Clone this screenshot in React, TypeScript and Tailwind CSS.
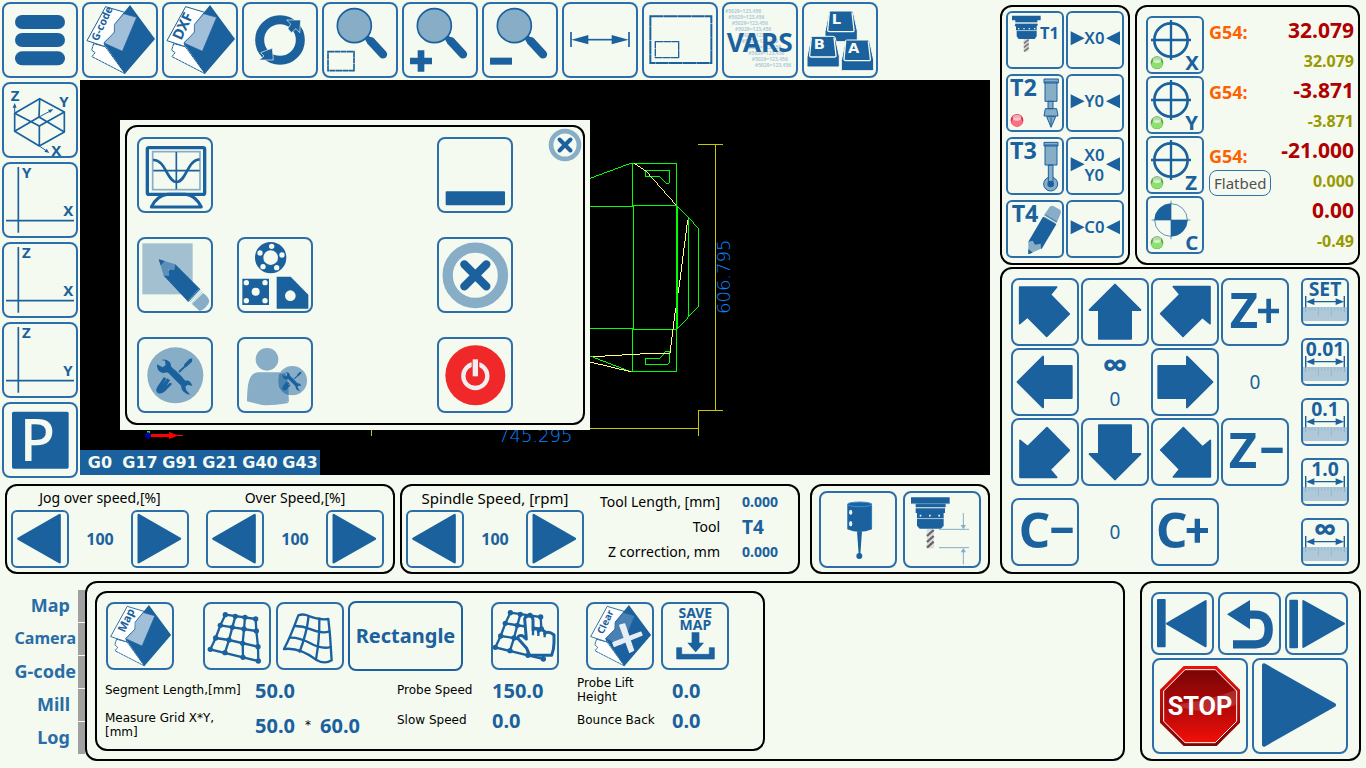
import { useState } from 'react';
import type { ReactNode } from 'react';
import clsx from 'clsx';

const BLUE = '#1a619e';
const SOFT = '#87adc7';
const PAPER = '#f4faf0';

interface IconButtonProps {
  label: string;
  className?: string;
  w: number;
  h?: number;
  children?: ReactNode;
  onClick?: () => void;
}

// Every icon is drawn three units to the pixel, the border included
function IconButton({ label, className, w, h = w, children, onClick }: IconButtonProps) {
  return (
    <button
      type="button"
      aria-label={label}
      onClick={onClick}
      className={clsx('shrink-0 rounded-lg border-2 border-[#2c6ea7] bg-[#f4faf0] font-bold', className)}
    >
      <svg viewBox={`6 6 ${w - 12} ${h - 12}`} className="block h-full w-full overflow-visible" fill={BLUE} aria-hidden="true">
        {children}
      </svg>
    </button>
  );
}

function Panel({ className, children }: { className?: string; children: ReactNode }) {
  return <section className={clsx('rounded-xl border-2 border-black', className)}>{children}</section>;
}

/* ---------- toolbar icons ---------- */

function FolderIcon({ text, size, x = 47, y = 119, clear = false }: { text: string; size: number; x?: number; y?: number; clear?: boolean }) {
  return (
    <>
      <path d="M35 125 L29 144 L39 152 L30 164 L129 215 L70 134 Z" fill="#fff" stroke={BLUE} strokeWidth="3" strokeDasharray="9 1" />
      <path d="M71 14 L128 31 L103 70 L98 92 L66 122 L70 134 L15 116 Z" fill="#fff" stroke={BLUE} strokeWidth="3" />
      <path d="M144 9 L219 111 L129 215 L66 125 L96 91 L98 66 Z" />
      <path d="M125 35 L164 46 L121 148 L66 123 L97 91 L97 68 Z" fill={clear ? '#4a80b3' : '#a2bfd9'} stroke={BLUE} strokeWidth="2" />
      {clear && (
        <>
          <path d="M114 78 L129 74 L159 162 L147 168 Z" fill="#e6edf5" stroke="#e6edf5" strokeWidth="6" strokeLinejoin="round" />
          <path d="M90 137 L184 101 L188 111 L95 149 Z" fill="#e6edf5" stroke="#e6edf5" strokeWidth="5" strokeLinejoin="round" />
        </>
      )}
      <text x={x} y={y} fontSize={size} transform={`rotate(-65 ${x} ${y})`}>{text}</text>
    </>
  );
}

function Magnifier() {
  return (
    <>
      <circle cx="97" cy="71" r="51" fill={SOFT} stroke={BLUE} strokeWidth="5" />
      <path d="M147 118 L183 157" stroke={BLUE} strokeWidth="25" strokeLinecap="round" />
      <path d="M128 111 L138 101 L157 110 L138 127 Z" />
    </>
  );
}

function Keycap({ x, y, letter }: { x: number; y: number; letter: string }) {
  return (
    <g transform={`translate(${x} ${y})`}>
      <path d="M12 2 Q14 0 18 0 H78 Q84 0 85 5 L97 60 V88 Q97 92 92 92 H4 Q0 92 0 88 V62 Z" stroke={PAPER} strokeWidth="3" />
      <path d="M13 4 L8 58 Q8 62 14 62 H82 Q88 62 87 57 L81 4" fill="none" stroke={PAPER} strokeWidth="4" />
      <text x="20" y="39" fontSize="44" fill={PAPER} fontFamily="'DejaVu Sans', sans-serif">{letter}</text>
    </g>
  );
}

function AxisIcon({ up, side }: { up: string; side: string }) {
  return (
    <>
      <path d="M49 15 V212 M12 176 H216" stroke={BLUE} strokeWidth="5" />
      <text x="60" y="47" fontSize="45">{up}</text>
      <text x="184" y="162" fontSize="45">{side}</text>
    </>
  );
}

const varsRows = Array.from({ length: 10 }, (_, i) => i);

function Toolbar({ onMenu }: { onMenu: () => void }) {
  const btn = 'size-[76px]';
  return (
    <nav aria-label="Main tools" className="flex gap-1 p-0.5">
      <IconButton label="Menu" className={btn} w={228} onClick={onMenu}>
        <rect x="39" y="39" width="150" height="42" rx="21" />
        <rect x="39" y="93" width="150" height="42" rx="21" />
        <rect x="39" y="148" width="150" height="42" rx="21" />
      </IconButton>
      <IconButton label="Open G-code" className={btn} w={228}>
        <FolderIcon text="G-code" size={32} />
      </IconButton>
      <IconButton label="Open DXF" className={btn} w={228}>
        <FolderIcon text="DXF" size={44} x={58} y={117} />
      </IconButton>
      <IconButton label="Reload" className={btn} w={228}>
        <circle cx="114" cy="114" r="61" fill="none" stroke={BLUE} strokeWidth="27" />
        <path d="M134 54 H176 L173 92 L162 80 L148 92 L138 80 L146 66 Z" stroke={PAPER} strokeWidth="2" />
        <path d="M94 174 H52 L66 162 L56 152 L76 144 L91 139 Z" stroke={PAPER} strokeWidth="2" />
      </IconButton>
      <IconButton label="Zoom to area" className={btn} w={228}>
        <Magnifier />
        <rect x="18" y="149" width="78" height="57" fill="none" stroke={BLUE} strokeWidth="5" strokeDasharray="18 1" />
      </IconButton>
      <IconButton label="Zoom in" className={btn} w={228}>
        <Magnifier />
        <path d="M24 167 H47 V145 H67 V167 H90 V187 H67 V209 H47 V187 H24 Z" />
      </IconButton>
      <IconButton label="Zoom out" className={btn} w={228}>
        <Magnifier />
        <rect x="24" y="167" width="66" height="21" />
      </IconButton>
      <IconButton label="Measure" className={btn} w={228}>
        <path d="M27 90 V135 M201 90 V135" stroke={BLUE} strokeWidth="5" />
        <path d="M70 113 H160" stroke={BLUE} strokeWidth="5" />
        <path d="M28 113 L79 99 V127 Z M200 113 L149 99 V127 Z" />
      </IconButton>
      <IconButton label="Work area" className={btn} w={228}>
        <rect x="25" y="43" width="183" height="140" fill="none" stroke={BLUE} strokeWidth="6" strokeDasharray="40 1" />
        <rect x="40" y="119" width="70" height="48" fill="none" stroke={BLUE} strokeWidth="4" strokeDasharray="23 1" />
      </IconButton>
      <IconButton label="Variables" className={btn} w={228}>
        <g fill="#b1cbd8" fontSize="15">
          {varsRows.map((i) => (
            <text key={i} x={9 + i * 10} y={34 + i * 18}>#5029=123,456</text>
          ))}
        </g>
        <text x="14" y="150" fontSize="79">VARS</text>
      </IconButton>
      <IconButton label="Keyboard" className={btn} w={228}>
        <Keycap x={69} y={27} letter="L" />
        <Keycap x={15} y={103} letter="B" />
        <Keycap x={118} y={114} letter="A" />
      </IconButton>
    </nav>
  );
}

function ViewBar() {
  const btn = 'size-[76px]';
  return (
    <nav aria-label="Views" className="flex flex-col gap-1 p-0.5">
      <IconButton label="3D view" className={btn} w={228}>
        <g fill="none" stroke={BLUE} strokeWidth="5" strokeLinejoin="round">
          <path d="M113 50 L187 90 V150 L112 192 L38 148 V94 Z" />
          <path d="M113 50 L111 105 M112 132 V192" />
          <path d="M38 94 L112 132 L187 90 M38 148 L111 105 L187 150" />
          <path d="M111 105 L145 87 M38 92 V70 M112 192 L134 207" strokeWidth="3" />
        </g>
        <path d="M154 82 L138 83 L144 93 Z M38 63 L32 77 H44 Z M142 213 L127 209 L134 200 Z" />
        <text x="26" y="57" fontSize="45">Z</text>
        <text x="172" y="74" fontSize="45">Y</text>
        <text x="148" y="223" fontSize="45">X</text>
      </IconButton>
      <IconButton label="XY view" className={btn} w={228}><AxisIcon up="Y" side="X" /></IconButton>
      <IconButton label="XZ view" className={btn} w={228}><AxisIcon up="Z" side="X" /></IconButton>
      <IconButton label="YZ view" className={btn} w={228}><AxisIcon up="Z" side="Y" /></IconButton>
      <IconButton label="Park" className={btn} w={228}>
        <rect x="30" y="29" width="170" height="171" rx="5" />
        <text x="53" y="176" fontSize="174" fontWeight="500" fill={PAPER}>P</text>
      </IconButton>
    </nav>
  );
}

/* ---------- drawing area ---------- */

function ToolpathView() {
  return (
    <svg viewBox="0 0 910 395" className="block h-[395px] w-[910px] max-w-none" aria-label="Tool path" fill="none">
      <g transform="translate(500 30) scale(0.33333)" strokeWidth="3" shapeRendering="crispEdges">
        <path d="M354 103 H429 M406 103 V901 M354 901 H429 M355 901 V977 M-628 955 H355 M-626 955 V977" stroke="#c8c800" />
        <g stroke="#00ff00">
          <path d="M30 205 L152 160 H289 V785 H152 L30 738" />
          <path d="M157 160 V286 H289 M30 289 H160 V656 H30 M289 658 H157 V785" />
          <path d="M292 289 V656 L355 590 V354 L292 289 M325 322 V622" />
          <path d="M196 181 H268 V220 H258 L239 199 H196 Z" />
          <path d="M196 763 H264 L268 758 V724 H258 L239 745 H196 Z" />
        </g>
        <path d="M163 160 L198 183 L289 286 M323 330 L295 548 M287 594 L270 730 L198 731 L40 740 M30 756 L152 785" stroke="#ffff80" />
      </g>
      <g fill="#0a84ff" fontFamily="'DejaVu Sans', sans-serif" fontSize="18" fontWeight="200">
        <text x="418" y="362">745.295</text>
        <text x="650" y="234" transform="rotate(-90 650 234)">606.795</text>
      </g>
      <path d="M67 351 H70 V355 H67 Z" fill="#00ff00" />
      <path d="M71 354 H89 V352 L97 355 H103 V356 H97 L89 359 V357 H71 Z" fill="#ff0000" />
      <path d="M65 354 L68 352 L71 354 V357 L68 359 L65 357 Z" fill="#0000a0" />
    </svg>
  );
}

function WrenchTools() {
  return (
    <>
      <path d="M90 90 L143 143" stroke={BLUE} strokeWidth="20" />
      <path d="M60 82 L77 91 L86 84 L84 71 L73 69 Q88 64 98 75 Q105 84 100 98 L96 106 L76 108 Q58 101 60 82 Z" />
      <path d="M166 147 L152 143 L145 149 L148 160 L160 173 Q146 172 138 163 Q131 154 133 140 L142 132 Q160 125 166 147 Z" />
      <path d="M166 64 L157 66 L142 82 L141 88 L147 91 L165 74 Z M142 86 L124 103 L128 107 L146 90 Z" />
      <path d="M112 98 L136 121 M106 102 L112 107" stroke={BLUE} strokeWidth="2" />
      <path d="M81 120 L61 149 Q54 161 62 168 Q72 173 84 163 L106 140 L98 137 L88 147 L99 130 L91 124 L78 142 L88 125 Z" />
    </>
  );
}

function MainMenu({ onClose }: { onClose: () => void }) {
  const btn = 'size-[76px]';
  return (
    <div role="dialog" aria-label="Main menu" className="absolute left-10 top-10 bg-[#f4faf0] p-[5px]">
      <div className="grid h-[300px] w-[460px] grid-cols-[repeat(4,76px)] grid-rows-[repeat(3,76px)] gap-6 rounded-xl border-2 border-black p-2.5">
        <IconButton label="Machine monitor" className={btn} w={228}>
          <rect x="31" y="32" width="172" height="140" rx="5" fill="none" stroke={BLUE} strokeWidth="10" />
          <rect x="47" y="44" width="142" height="114" fill="none" stroke={SOFT} strokeWidth="5" />
          <path d="M118 45 V157 M49 101 H188" stroke={BLUE} strokeWidth="5" />
          <path d="M48 69 C85 66 90 135 119 135 S150 69 188 67" fill="none" stroke={BLUE} strokeWidth="8" />
          <path d="M43 210 Q60 176 92 172 H146 Q176 176 193 210 Z" fill="none" stroke={BLUE} strokeWidth="9" strokeLinejoin="round" />
        </IconButton>
        <IconButton label="Minimize" className={clsx(btn, 'col-start-4')} w={228}>
          <rect x="26" y="163" width="178" height="42" rx="3" />
        </IconButton>
        <IconButton label="Editor" className={btn} w={228}>
          <rect x="16" y="19" width="151" height="153" fill="#a3c0d1" />
          <path d="M80 116 L115 82 L190 157 L154 195 Z" />
          <path d="M65 67 L115 82 L112 100 L95 97 L97 116 L80 116 Z" fill="#5d90b9" />
          <path d="M65 67 L83 72 L71 85 Z" />
          <path d="M155 190 L187 155 M159 195 L192 160 M164 199 L196 164" stroke={SOFT} strokeWidth="2" />
          <path d="M165 201 L198 168 Q216 180 217 194 Q208 215 188 222 Z" fill={SOFT} />
        </IconButton>
        <IconButton label="Parts" className={btn} w={228}>
          <circle cx="101" cy="62" r="47" />
          <path d="M16 125 H96 V204 H16 Z M119 119 H161 L214 173 V215 H119 Z" />
          <g fill={PAPER}>
            <circle cx="101" cy="62" r="22" />
            <circle cx="104" cy="28" r="8" />
            <circle cx="135" cy="54" r="8" />
            <circle cx="119" cy="92" r="8" />
            <circle cx="78" cy="89" r="8" />
            <circle cx="69" cy="48" r="8" />
            <circle cx="28" cy="137" r="8" />
            <circle cx="84" cy="137" r="8" />
            <circle cx="28" cy="191" r="8" />
            <circle cx="84" cy="191" r="8" />
            <circle cx="56" cy="164" r="12" />
            <circle cx="160" cy="176" r="16" />
          </g>
        </IconButton>
        <IconButton label="Close program" className={clsx(btn, 'col-start-4')} w={228}>
          <circle cx="115" cy="115" r="83" fill="none" stroke={SOFT} strokeWidth="31" />
          <path d="M82 82 L148 148 M148 82 L82 148" stroke={BLUE} strokeWidth="25" strokeLinecap="round" />
        </IconButton>
        <IconButton label="Settings" className={btn} w={228}>
          <circle cx="115" cy="115" r="84" fill={SOFT} />
          <WrenchTools />
        </IconButton>
        <IconButton label="User settings" className={btn} w={228}>
          <circle cx="90" cy="67" r="34" fill={SOFT} />
          <path d="M30 193 C32 145 32 106 68 106 H122 C150 106 154 130 156 194 L150 193 L155 198 Q85 209 66 202 Z" fill={SOFT} />
          <circle cx="166" cy="131" r="44" fill={SOFT} />
          <path d="M126 110 Q122 131 126 150 Q136 170 155 174 Q155 130 145 108 Z" fill="#4a82b0" />
          <g transform="translate(105 70) scale(0.53)"><WrenchTools /></g>
        </IconButton>
        <IconButton label="Power off" className={clsx(btn, 'col-start-4')} w={228}>
          <circle cx="115" cy="115" r="90" fill="#f02829" />
          <circle cx="115" cy="117" r="36" fill="none" stroke="#f0eeee" strokeWidth="13" />
          <rect x="104" y="64" width="23" height="57" fill="#f02829" />
          <rect x="107" y="67" width="16" height="51" fill="#f0eeee" />
        </IconButton>
      </div>
      <button type="button" aria-label="Close menu" onClick={onClose} className="absolute right-2 top-2 size-[34px]">
        <svg viewBox="0 0 100 100" className="block size-full">
          <circle cx="50" cy="50" r="41" fill={PAPER} stroke={SOFT} strokeWidth="14" />
          <path d="M34 34 L66 66 M66 34 L34 66" stroke={BLUE} strokeWidth="12" strokeLinecap="round" />
        </svg>
      </button>
    </div>
  );
}

/* ---------- tools and coordinates ---------- */

function Led({ x, y, color }: { x: number; y: number; color: 'green' | 'red' }) {
  const dark = color === 'green' ? '#4f9f3a' : '#d9304c';
  const light = color === 'green' ? '#8ee070' : '#ff6f83';
  return (
    <g>
      <circle cx={x} cy={y} r="19" fill={dark} />
      <ellipse cx={x} cy={y + 5} rx="17" ry="13" fill={light} />
      <ellipse cx={x} cy={y - 8} rx="13" ry="9" fill="#fff" opacity="0.6" />
    </g>
  );
}

function Spindle() {
  return (
    <>
      <path d="M18 14 H104 V28 H18 Z M28 28 H94 V34 H28 Z M28 38 H95 V44 H92 V58 H30 V46 H26 Z M32 60 H92 V76 L86 84 H38 L32 76 Z" />
      <path d="M28 36 H94 M32 59 H92" stroke={SOFT} strokeWidth="2" />
      <path d="M36 53 H90" stroke={PAPER} strokeWidth="4" strokeDasharray="4 12" />
      <path d="M53 84 H69 V118 L61 124 L53 118 Z" fill="#d8d8d8" />
      <path d="M54 97 L68 86 M54 109 L68 98 M54 121 L68 110" stroke="#777" strokeWidth="5" />
    </>
  );
}

function ZeroMarks({ lines }: { lines: string[] }) {
  return (
    <>
      <path d="M14 61 V103 L56 82 Z M162 61 V103 L120 82 Z" />
      {lines.map((t, i) => (
        <text key={t} x="85" y={(lines.length > 1 ? 73 : 99) + i * 58} fontSize="50" fontWeight="600" textAnchor="middle">{t}</text>
      ))}
    </>
  );
}

function ToolPanel() {
  const btn = 'size-[58px] rounded-md';
  return (
    <Panel className="grid w-[130px] shrink-0 grid-cols-2 content-start gap-x-0.5 gap-y-[5px] p-1">
      <IconButton label="Tool T1" className={btn} w={174}>
        <Spindle />
        <text x="102" y="84" fontSize="49">T1</text>
      </IconButton>
      <IconButton label="Zero X" className={btn} w={174}><ZeroMarks lines={['X0']} /></IconButton>
      <IconButton label="Tool T2" className={btn} w={174}>
        <text x="12" y="67" fontSize="70">T2</text>
        <Led x={33} y={139} color="red" />
        <g fill={SOFT} stroke={BLUE} strokeWidth="3">
          <path d="M117 24 H153 V82 H117 Z M114 15 H157 V27 H114 Z M126 82 H141 V104 H126 Z M118 104 H152 L156 126 H114 Z M122 128 H149 L135 160 Z" />
        </g>
        <path d="M135 131 V158" stroke={BLUE} strokeWidth="3" />
      </IconButton>
      <IconButton label="Zero Y" className={btn} w={174}><ZeroMarks lines={['Y0']} /></IconButton>
      <IconButton label="Tool T3" className={btn} w={174}>
        <text x="12" y="67" fontSize="70">T3</text>
        <g fill={SOFT} stroke={BLUE} strokeWidth="3">
          <circle cx="134" cy="141" r="21" />
          <path d="M117 24 H153 V84 H117 Z M114 16 H156 V27 H114 Z M127 84 H141 V134 H127 Z" />
        </g>
        <circle cx="134" cy="141" r="10" />
      </IconButton>
      <IconButton label="Zero X and Y" className={btn} w={174}><ZeroMarks lines={['X0', 'Y0']} /></IconButton>
      <IconButton label="Tool T4" className={btn} w={174}>
        <text x="17" y="67" fontSize="70">T4</text>
        <path d="M111 50 L151 73 L107 147 L67 125 Z" />
        <path d="M127 26 Q132 15 142 18 L160 28 Q168 34 163 43 L152 69 L114 46 Z" fill={SOFT} />
        <path d="M114 51 L149 71 M118 45 L152 65" stroke={BLUE} strokeWidth="2" />
        <path d="M67 125 L80 122 L87 134 L104 131 L105 146 L67 163 Z" fill={SOFT} />
        <path d="M67 163 V147 L80 158 Z" />
      </IconButton>
      <IconButton label="Zero C" className={btn} w={174}><ZeroMarks lines={['C0']} /></IconButton>
    </Panel>
  );
}

const axes = [
  { axis: 'X', system: 'G54:', work: '32.079', machine: '32.079' },
  { axis: 'Y', system: 'G54:', work: '-3.871', machine: '-3.871' },
  { axis: 'Z', system: 'G54:', work: '-21.000', machine: '0.000', mode: 'Flatbed' },
  { axis: 'C', system: '', work: '0.00', machine: '-0.49' },
];

function CoordinatePanel() {
  return (
    <Panel className="flex min-w-0 flex-1 flex-col gap-0.5 py-[9px] pl-[9px] pr-1">
      {axes.map(({ axis, system, work, machine, mode }) => (
        <div key={axis} className="flex h-[58px] items-start">
          <IconButton label={`Home ${axis}`} className="size-[58px] rounded-md" w={174}>
            {axis === 'C' ? (
              <>
                <circle cx="75" cy="72" r="49" fill="none" stroke={BLUE} strokeWidth="2" />
                <path d="M75 72 V23 A49 49 0 0 0 26 72 Z M75 72 V121 A49 49 0 0 0 124 72 Z" />
                <path d="M75 14 V130 M17 72 H133" stroke={BLUE} strokeWidth="2" />
              </>
            ) : (
              <>
                <circle cx="75" cy="72" r="50" fill="none" stroke={BLUE} strokeWidth="8" />
                <path d="M75 12 V132 M15 72 H135" stroke={BLUE} strokeWidth="7" />
              </>
            )}
            <Led x={33} y={140} color="green" />
            <text x="118" y="162" fontSize="61">{axis}</text>
          </IconButton>
          <div className="flex flex-1 flex-col items-start pl-[5px] pt-0.5">
            <span className={clsx('text-lg font-bold leading-7 text-[#ff6000]', mode && 'pt-1')}>{system}</span>
            {mode && (
              <button type="button" className="h-[26px] shrink-0 rounded-lg border border-[#3273aa] px-1 text-[15px] leading-6 text-[#505050]">{mode}</button>
            )}
          </div>
          <div className="flex flex-col text-right font-bold">
            <output className="text-[21px] leading-[29px] text-[#b00000]">{work}</output>
            <output className="text-base leading-[33px] text-[#999900]">{machine}</output>
          </div>
        </div>
      ))}
    </Panel>
  );
}

/* ---------- jog ---------- */

function StraightArrow({ turn }: { turn: number }) {
  return (
    <path
      d="M102 20 L178 96 H150 V182 H54 V96 H26 Z"
      stroke={BLUE}
      strokeWidth="6"
      strokeLinejoin="round"
      transform={`rotate(${turn} 102 102)`}
    />
  );
}

function DiagonalArrow({ turn }: { turn: number }) {
  return (
    <path
      d="M26 27 H137 L118 50 L175 108 L107 175 L49 117 L26 137 Z"
      stroke={BLUE}
      strokeWidth="5"
      strokeLinejoin="round"
      transform={`rotate(${turn} 102 102)`}
    />
  );
}

const steps = ['SET', '0.01', '0.1', '1.0', '∞'];

function StepButton({ step }: { step: string }) {
  return (
    <IconButton label={`Step ${step}`} className="size-12 rounded-md" w={144}>
      <text x="72" y={step === '∞' ? 68 : 55} fontSize={step === '∞' ? 98 : 58} textAnchor="middle">{step}</text>
      <rect x="6" y="87" width="132" height="42" fill="#b0c9d8" />
      <path d="M24 87 V98 M33 87 V98 M42 87 V98 M52 87 V113 M62 87 V98 M72 87 V98 M81 87 V98 M91 87 V113 M101 87 V98 M111 87 V98 M120 87 V98" stroke={SOFT} strokeWidth="2" />
      <path d="M14 54 V102 M130 54 V102" stroke={SOFT} strokeWidth="3" />
      <path d="M14 54 V88 M130 54 V88 M34 71 H110" stroke={BLUE} strokeWidth="4" />
      <path d="M15 71 L40 61 V81 Z M129 71 L104 61 V81 Z" />
    </IconButton>
  );
}

function JogPanel() {
  const btn = 'size-[68px]';
  const readout = 'flex flex-col items-center justify-center text-[19px] text-[#1a619e]';
  return (
    <Panel className="mt-0.5 flex justify-between px-[9px] pb-1.5 pt-[9px]">
      <div>
        <div className="grid grid-cols-[repeat(4,68px)] gap-0.5">
          <IconButton label="Jog left and up" className={btn} w={204}><DiagonalArrow turn={0} /></IconButton>
          <IconButton label="Jog up" className={btn} w={204}><StraightArrow turn={0} /></IconButton>
          <IconButton label="Jog right and up" className={btn} w={204}><DiagonalArrow turn={90} /></IconButton>
          <IconButton label="Jog Z plus" className={btn} w={204}>
            <text x="26" y="150" fontSize="147">Z</text>
            <path d="M136 62 H150 V92 H174 V106 H150 V135 H136 V106 H111 V92 H136 Z" />
          </IconButton>
          <IconButton label="Jog left" className={btn} w={204}><StraightArrow turn={-90} /></IconButton>
          <div className={readout}>
            <span className="text-[36px] font-bold leading-[34px]">∞</span>
            <span className="leading-[34px]">0</span>
          </div>
          <IconButton label="Jog right" className={btn} w={204}><StraightArrow turn={90} /></IconButton>
          <div className={readout}>0</div>
          <IconButton label="Jog left and down" className={btn} w={204}><DiagonalArrow turn={-90} /></IconButton>
          <IconButton label="Jog down" className={btn} w={204}><StraightArrow turn={180} /></IconButton>
          <IconButton label="Jog right and down" className={btn} w={204}><DiagonalArrow turn={180} /></IconButton>
          <IconButton label="Jog Z minus" className={btn} w={204}>
            <text x="23" y="150" fontSize="147">Z</text>
            <rect x="121" y="89" width="64" height="16" />
          </IconButton>
        </div>
        <div className="mt-3 grid grid-cols-[repeat(4,68px)] gap-0.5">
          <IconButton label="Jog C minus" className={btn} w={204}>
            <text x="23" y="150" fontSize="147">C</text>
            <rect x="121" y="89" width="64" height="16" />
          </IconButton>
          <div className={readout}>0</div>
          <IconButton label="Jog C plus" className={btn} w={204}>
            <text x="15" y="150" fontSize="147">C</text>
            <path d="M131 62 H147 V90 H171 V105 H147 V134 H131 V105 H107 V90 H131 Z" />
          </IconButton>
        </div>
      </div>
      <div className="flex flex-col justify-between">
        {steps.map((s) => <StepButton key={s} step={s} />)}
      </div>
    </Panel>
  );
}

/* ---------- speeds ---------- */

function SpeedControl({ title, wide = false }: { title: string; wide?: boolean }) {
  const [value, setValue] = useState(100);
  return (
    <div className="w-[178px] shrink-0">
      <div className={clsx('text-center leading-6 text-black', wide ? 'text-[15px]' : 'text-sm')}>{title}</div>
      <div className="flex items-center justify-between">
        <IconButton label={`${title} down`} className="size-[58px] rounded-md" w={174} onClick={() => setValue(value - 1)}>
          <path d="M22 86 L146 15 V157 Z" stroke={BLUE} strokeWidth="7" strokeLinejoin="round" />
        </IconButton>
        <output className="text-base font-bold text-[#1a619e]">{value}</output>
        <IconButton label={`${title} up`} className="size-[58px] rounded-md" w={174} onClick={() => setValue(value + 1)}>
          <path d="M147 86 L23 15 V157 Z" stroke={BLUE} strokeWidth="7" strokeLinejoin="round" />
        </IconButton>
      </div>
    </div>
  );
}

function SpeedRow() {
  return (
    <div className="mt-1 flex pl-[5px]">
      <Panel className="flex w-[390px] shrink-0 gap-[17px] p-1 pt-0">
        <SpeedControl title="Jog over speed,[%]" />
        <SpeedControl title="Over Speed,[%]" />
      </Panel>
      <Panel className="ml-[5px] flex min-w-0 flex-1 p-1 pt-0">
        <SpeedControl title="Spindle Speed, [rpm]" wide />
        <dl className="grid flex-1 grid-cols-[136px_1fr] content-start items-center gap-x-[22px] pt-[3px] text-sm leading-[25px]">
          <dt className="text-right">Tool Length, [mm]</dt>
          <dd className="font-bold text-[#1a619e]">0.000</dd>
          <dt className="text-right">Tool</dt>
          <dd className="text-[19px] font-bold leading-[24px] text-[#1a619e]">T4</dd>
          <dt className="text-right">Z correction, mm</dt>
          <dd className="font-bold text-[#1a619e]">0.000</dd>
        </dl>
      </Panel>
      <Panel className="ml-2.5 flex w-[180px] shrink-0 items-center justify-center gap-1.5">
        <IconButton label="Probe" className="h-[77px] w-[78px]" w={234} h={231}>
          <path d="M85 40 V115 Q121 130 159 115 V40 Z" />
          <ellipse cx="122" cy="40" rx="37" ry="7" stroke="#3f8fd6" strokeWidth="3" />
          <path d="M86 42 V113 M158 42 V113" stroke="#3f8fd6" strokeWidth="2" />
          <ellipse cx="95" cy="64" rx="5" ry="8" fill="#e6f2ff" />
          <ellipse cx="95" cy="98" rx="5" ry="8" fill="#e6f2ff" />
          <path d="M114 121 H129 L124 190 H119 Z" />
          <circle cx="121" cy="195" r="9" />
        </IconButton>
        <IconButton label="Tool length sensor" className="h-[77px] w-[78px]" w={234} h={231}>
          <path d="M24 19 H140 V38 H128 V48 H38 V38 H24 Z M38 52 H126 V66 H122 V82 H42 V66 H38 Z M42 84 H122 V104 L114 113 H50 L42 104 Z" />
          <path d="M38 50 H128 M42 83 H122 M24 38 H140" stroke={SOFT} strokeWidth="2" />
          <path d="M50 74 H115" stroke={PAPER} strokeWidth="5" strokeDasharray="5 23" />
          <path d="M71 114 H93 V172 H71 Z" fill="#ddd" />
          <path d="M72 135 L92 117 M72 153 L92 135 M72 170 L92 152" stroke="#666" strokeWidth="7" />
          <path d="M108 115 H198 M108 170 H198 M181 66 V105 M181 180 V220" stroke={SOFT} strokeWidth="3" />
          <path d="M181 115 L173 102 H189 Z M181 171 L173 184 H189 Z" fill={SOFT} />
        </IconButton>
      </Panel>
    </div>
  );
}

/* ---------- map page ---------- */

const tabs = ['Map', 'Camera', 'G-code', 'Mill', 'Log'];

function PageTabs() {
  const [active, setActive] = useState('Map');
  return (
    <div role="tablist" aria-label="Pages" className="mt-[9px] flex w-[85px] shrink-0 flex-col gap-px">
      {tabs.map((t) => (
        <button
          key={t}
          type="button"
          role="tab"
          aria-selected={active === t}
          onClick={() => setActive(t)}
          className={clsx(
            'h-8 border-r-[7px] border-[#a0a0a0] pb-0.5 text-right font-bold leading-[30px] text-[#2a6da6]',
            t === 'Camera' ? 'text-base' : 'text-lg',
            t.length > 4 ? 'pr-0.5' : 'pr-2'
          )}
        >
          {t}
        </button>
      ))}
    </div>
  );
}

function Field({ id, label, value, className }: { id: string; label: string; value: string; className: string }) {
  return (
    <div className={clsx('grid h-[30px] items-center', className)}>
      <label htmlFor={id} className="font-['DejaVu_Sans',sans-serif] text-xs leading-[14px] text-black">{label}</label>
      <input id={id} defaultValue={value} className="h-[30px] w-[60px] bg-transparent text-xl font-bold text-[#1a619e]" />
    </div>
  );
}

const meshNodes = [
  [67, 38], [97, 43], [126, 46], [158, 51],
  [52, 70], [88, 76], [123, 81], [160, 87],
  [38, 108], [78, 114], [119, 124], [165, 134],
  [22, 142], [66, 152], [120, 166], [166, 177],
];

function Mesh() {
  return (
    <>
      <path
        d="M67 38 L158 51 L160 87 L165 134 L166 177 L120 166 L22 142 L38 108 L52 70 Z M97 43 L88 76 L78 114 L66 152 M126 46 L123 81 L119 124 L120 166 M52 70 L160 87 M38 108 L78 114 L165 134"
        fill="none"
        stroke={BLUE}
        strokeWidth="7"
      />
      {meshNodes.map(([x, y]) => <circle key={`${x}-${y}`} cx={x} cy={y} r="8" />)}
    </>
  );
}

function MapPage() {
  const btn = 'size-[68px]';
  return (
    <Panel className="m-2 h-40 w-[670px] max-w-full pl-2 pt-2">
      <div className="ml-px flex items-center">
        <IconButton label="Open map" className={btn} w={228}><FolderIcon text="Map" size={38} x={62} y={104} /></IconButton>
        <IconButton label="Point grid" className={clsx(btn, 'ml-[29px]')} w={204}><Mesh /></IconButton>
        <IconButton label="Surface grid" className={clsx(btn, 'ml-[5px]')} w={204}>
          <g fill="none" stroke={BLUE} strokeWidth="7" strokeLinecap="round" strokeLinejoin="round">
            <path d="M67 40 Q82 34 98 42 Q130 55 157 51 L162 100 L167 175 Q145 188 120 173 Q70 135 24 141 Q42 108 67 40 Z" />
            <path d="M98 42 Q92 95 71 149 M130 50 Q131 110 120 172 M57 72 Q80 72 105 82 Q138 96 160 88 M42 107 Q70 106 103 124 Q138 143 164 135" />
          </g>
        </IconButton>
        <button type="button" className="ml-1 h-[70px] w-[115px] rounded-lg border-2 border-[#1a619e] text-xl font-bold text-[#1a619e]">Rectangle</button>
        <IconButton label="Probe by hand" className={clsx(btn, 'ml-7')} w={204}>
          <g transform="translate(-9 -6)"><Mesh /></g>
          <path
            d="M101 51 Q102 42 114 42 Q125 42 126 53 V84 Q135 76 142 84 V89 Q150 79 161 88 V95 Q172 85 189 99 V122 Q189 140 182 160 H116 L107 139 Q92 122 80 109 Q81 98 94 101 L106 111 Z"
            fill={PAPER}
            stroke={BLUE}
            strokeWidth="9"
            strokeLinejoin="round"
          />
          <path d="M126 84 V100 M142 88 V102 M161 94 V106" stroke={BLUE} strokeWidth="7" />
        </IconButton>
        <IconButton label="Clear map" className={clsx(btn, 'ml-[27px]')} w={228}><FolderIcon text="Clear" size={33} x={57} y={110} clear /></IconButton>
        <IconButton label="Save map" className={clsx(btn, 'ml-[7px]')} w={204}>
          <text x="103" y="48" fontSize="42" textAnchor="middle">SAVE</text>
          <text x="103" y="83" fontSize="42" textAnchor="middle">MAP</text>
          <path d="M92 91 H115 V122 H129 L104 151 L79 122 H92 Z" />
          <path d="M47 137 H62 V157 H145 V137 H160 V171 H47 Z" stroke={BLUE} strokeWidth="2" />
        </IconButton>
      </div>
      <div className="mt-1 flex">
        <div className="w-[292px]">
          <Field id="segment" label="Segment Length,[mm]" value="50.0" className="grid-cols-[150px_1fr]" />
          <div className="mt-[5px] flex items-center">
            <label htmlFor="grid-x" className="w-[150px] pr-6 font-['DejaVu_Sans',sans-serif] text-xs leading-[14px] text-black">Measure Grid X*Y, [mm]</label>
            <input id="grid-x" defaultValue="50.0" className="h-[30px] w-12 bg-transparent text-xl font-bold text-[#1a619e]" />
            <span className="w-[17px] pl-0.5 font-['DejaVu_Sans',sans-serif] text-xs">*</span>
            <input aria-label="Grid Y" defaultValue="60.0" className="h-[30px] w-12 bg-transparent text-xl font-bold text-[#1a619e]" />
          </div>
        </div>
        <div className="w-[180px]">
          <Field id="probe-speed" label="Probe Speed" value="150.0" className="grid-cols-[95px_1fr]" />
          <Field id="slow-speed" label="Slow Speed" value="0.0" className="grid-cols-[95px_1fr]" />
        </div>
        <div>
          <Field id="probe-lift" label="Probe Lift Height" value="0.0" className="grid-cols-[80px_1fr] gap-x-[15px]" />
          <Field id="bounce-back" label="Bounce Back" value="0.0" className="grid-cols-[80px_1fr] gap-x-[15px]" />
        </div>
      </div>
    </Panel>
  );
}

/* ---------- program run ---------- */

function RunPanel() {
  return (
    <Panel className="ml-[15px] mr-[5px] w-[221px] shrink-0 pl-[9px] pr-[11px] pt-[9px]">
      <div className="flex justify-between">
        <IconButton label="To start" className="size-[63px]" w={189}>
          <rect x="18" y="21" width="26" height="145" rx="3" />
          <path d="M48 95 L164 27 V163 Z" stroke={BLUE} strokeWidth="6" strokeLinejoin="round" />
        </IconButton>
        <IconButton label="Step back" className="size-[63px]" w={189}>
          <path d="M27 67 L96 24 V112 Z" />
          <path d="M90 68 H112 Q152 68 152 112 Q152 157 112 157 H45" fill="none" stroke={BLUE} strokeWidth="25" />
        </IconButton>
        <IconButton label="Step forward" className="size-[63px]" w={189}>
          <rect x="13" y="23" width="26" height="146" rx="3" />
          <path d="M177 95 L55 27 V165 Z" stroke={BLUE} strokeWidth="6" strokeLinejoin="round" />
        </IconButton>
      </div>
      <div className="mt-[3px] flex justify-between pl-px">
        <IconButton label="Stop" className="size-24" w={288}>
          <defs>
            <linearGradient id="stopFace" x1="0" y1="0" x2="0" y2="1">
              <stop offset="0" stopColor="#7a0505" />
              <stop offset="0.5" stopColor="#b00808" />
              <stop offset="1" stopColor="#f01008" />
            </linearGradient>
            <linearGradient id="stopRim" x1="0" y1="0" x2="0" y2="1">
              <stop offset="0" stopColor="#f01008" />
              <stop offset="1" stopColor="#7a0505" />
            </linearGradient>
          </defs>
          <path d="M95 24 H194 L264 95 V194 L194 264 H95 L24 194 V95 Z" fill="url(#stopRim)" />
          <path d="M99 35 H190 L254 99 V190 L190 254 H99 L35 190 V99 Z" fill="url(#stopFace)" stroke="#fff" strokeWidth="3" />
          <path d="M70 140 Q180 125 252 95 V140 Q160 178 70 140 Z" fill="#fff" opacity="0.15" />
          <text x="144" y="172" fontSize="76" fill="#fff" textAnchor="middle" fontFamily="Roboto, sans-serif">STOP</text>
        </IconButton>
        <IconButton label="Start" className="size-24" w={288}>
          <path d="M36 22 L246 141 L36 260 Z" stroke={BLUE} strokeWidth="12" strokeLinejoin="round" />
        </IconButton>
      </div>
    </Panel>
  );
}

const modes = ['G0', 'G17', 'G91', 'G21', 'G40', 'G43'];

export default function App() {
  const [menuOpen, setMenuOpen] = useState(true);

  return (
    <main className="min-h-screen bg-[#f4faf0] font-['Noto_Sans','Open_Sans',sans-serif] text-black">
      <div className="flex gap-2.5">
        <div className="min-w-0 flex-1">
          <Toolbar onMenu={() => setMenuOpen(!menuOpen)} />
          <div className="flex">
            <ViewBar />
            <div className="relative h-[395px] min-w-0 flex-1 overflow-hidden bg-black">
              <ToolpathView />
              {menuOpen && <MainMenu onClose={() => setMenuOpen(false)} />}
              {/* Active modal codes */}
              <div className="absolute bottom-0 left-0 flex h-[25px] bg-[#1a619e] font-['DejaVu_Sans',sans-serif] font-bold leading-[25px] text-[#f4faf0]">
                {modes.map((m) => <span key={m} className="w-10 text-center">{m}</span>)}
              </div>
            </div>
          </div>
          <SpeedRow />
        </div>

        <div className="mr-1.5 w-[360px] shrink-0 pt-[5px]">
          <div className="flex gap-[5px]">
            <ToolPanel />
            <CoordinatePanel />
          </div>
          <JogPanel />
        </div>
      </div>

      <div className="mt-[7px] flex pb-1.5">
        <PageTabs />
        <Panel className="min-w-0 flex-1"><MapPage /></Panel>
        <RunPanel />
      </div>
    </main>
  );
}
